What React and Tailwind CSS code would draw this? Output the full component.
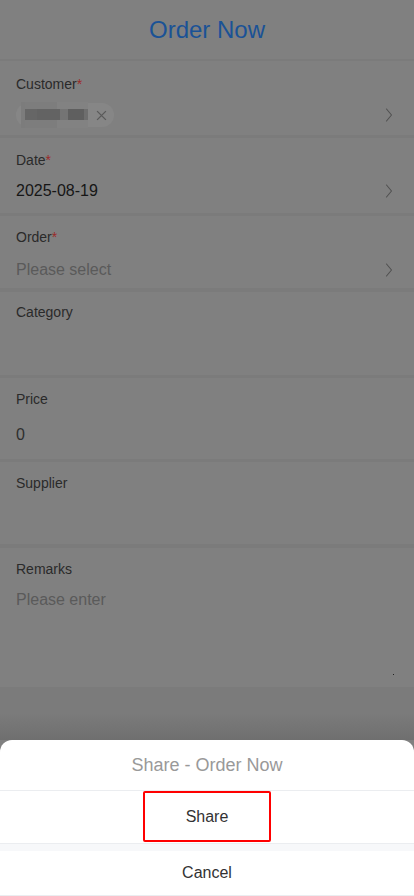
import React from "react";

const Chevron = () => (
    <svg width="8" height="16" viewBox="0 0 8 16" fill="none" className="shrink-0">
        <path d="M1.5 2 L6.5 8 L1.5 14" stroke="#505050" strokeWidth="1.1" strokeLinecap="round" strokeLinejoin="round" />
    </svg>
);

const Label = ({ text, required }) => (
    <div className="text-[14px] leading-[20px] text-[#2a2a2a]">
        {text}
        {required && <span className="text-[#9b2a2a]">*</span>}
    </div>
);

const Field = ({ label, required, height, top = 11, gap = 9, children, chevron }) => (
    <div className="pl-4 pr-[21px] bg-[#808080]" style={{ height, paddingTop: top }}>
        <Label text={label} required={required} />
        {children !== undefined && (
            <div className="flex items-center justify-between" style={{ marginTop: gap }}>
                <div className="flex-1">{children}</div>
                {chevron && <Chevron />}
            </div>
        )}
    </div>
);

const Sep = ({ h = "h-[3px]" }) => <div className={`${h} bg-[#7b7b7b]`} />;

export default function App() {
    return (
        <div className="relative h-[896px] w-full overflow-hidden bg-[#808080]" style={{ fontFamily: "'Liberation Sans', Arial, sans-serif" }}>
            {/* header */}
            <div className="h-[59px] flex items-center justify-center">
                <h1 className="text-[24px] text-[#1a5296]">Order Now</h1>
            </div>
            <Sep h="h-[2px]" />

            <Field label="Customer" required height={74} top={13} gap={9} chevron>
                <div className="flex items-center h-[24px] w-[98px] rounded-full bg-[#868686] pl-[5px]">
                    <div className="flex h-[26px] items-stretch">
                        <div className="w-[4px] bg-[#7c7c7c]" />
                        <div className="flex flex-col w-[63px]">
                            <div className="h-[7px] flex">
                                <div className="w-[32px] bg-[#7d7d7d]" />
                                <div className="w-[31px] bg-[#828282]" />
                            </div>
                            <div className="h-[11px] flex">
                                <div className="w-[12px] bg-[#666666]" />
                                <div className="w-[23px] bg-[#636363]" />
                                <div className="w-[8px] bg-[#747474]" />
                                <div className="w-[16px] bg-[#5f5f5f]" />
                                <div className="w-[4px] bg-[#6e6e6e]" />
                            </div>
                            <div className="h-[8px] flex">
                                <div className="w-[32px] bg-[#7d7d7d]" />
                                <div className="w-[31px] bg-[#828282]" />
                            </div>
                        </div>
                    </div>
                    <svg width="11" height="11" viewBox="0 0 10 10" className="ml-[8px]">
                        <path d="M1 1 L9 9 M9 1 L1 9" stroke="#5a5a5a" strokeWidth="1.2" />
                    </svg>
                </div>
            </Field>
            <Sep />

            <Field label="Date" required height={75} top={12} chevron>
                <div className="text-[16px] leading-[24px] text-[#161616]">2025-08-19</div>
            </Field>
            <Sep />

            <Field label="Order" required height={72} gap={11} chevron>
                <div className="text-[16px] leading-[24px] text-[#5a5a5a]">Please select</div>
            </Field>
            <Sep h="h-[4px]" />

            <Field label="Category" height={83} top={10} />
            <Sep />

            <Field label="Price" height={81}>
                <div className="text-[16px] leading-[24px] mt-[5px] text-[#2e2e2e]">0</div>
            </Field>
            <Sep />

            <Field label="Supplier" height={82} />
            <Sep h="h-[4px]" />

            <Field label="Remarks" height={139}>
                <div className="relative h-[100px]">
                    <div className="text-[16px] leading-[24px] text-[#5a5a5a]">Please enter</div>
                    <div className="absolute -right-[1px] top-[86px] h-[1px] w-[1px] bg-[#222]" />
                </div>
            </Field>

            <div className="h-[53px] bg-gradient-to-b from-[#7b7b7b] via-[#7b7b7b] to-[#6f6f6f]" />

            {/* action sheet */}
            <div className="absolute bottom-0 left-0 right-0 h-[156px] bg-white rounded-t-[12px] flex flex-col">
                <div className="h-[51px] flex items-center justify-center border-b border-[#ebedf0] text-[18px] text-[#999999]">
                    Share - Order Now
                </div>
                <div className="h-[52px] flex items-center justify-center">
                    <div className="w-[128px] h-[51px] -mt-[1px] border-2 border-[#ff0000] rounded-[2px] flex items-center justify-center text-[16px] text-[#323233]">
                        Share
                    </div>
                </div>
                <div className="h-[8px] bg-[#f7f8fa] border-t border-[#ebedf0]" />
                <div className="flex-1 flex items-center justify-center text-[16px] text-[#323233] border-b border-[#ebedf0]">
                    Cancel
                </div>
            </div>
        </div>
    );
}
